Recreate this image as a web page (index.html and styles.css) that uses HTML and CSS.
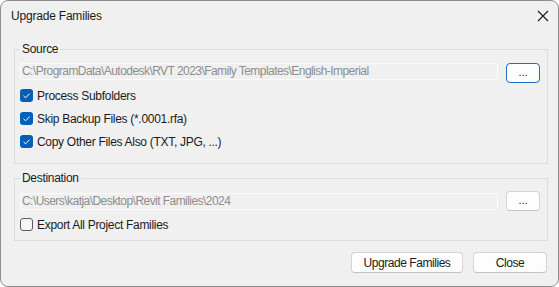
FILE: index.html
```html
<!DOCTYPE html>
<html>
<head>
<meta charset="utf-8">
<link rel="stylesheet" href="styles.css">
</head>
<body>
<div class="window">
  <div class="titlebar">
    <span class="title">Upgrade Families</span>
    <svg class="close-x" width="12" height="12" viewBox="0 0 12 12"><path d="M1 1 L11 11 M11 1 L1 11" stroke="#1a1a1a" stroke-width="1.1" fill="none"/></svg>
  </div>
  <div class="content">
    <fieldset class="group source">
      <legend>Source</legend>
      <div class="path-row">
        <div class="textbox">C:\ProgramData\Autodesk\RVT 2023\Family Templates\English-Imperial</div>
        <div class="btn browse focused">...</div>
      </div>
      <div class="check-row"><span class="box checked"><svg width="13" height="13" viewBox="0 0 13 13"><path d="M3.5 6.8 L5.6 8.8 L9.6 4.6" stroke="#fff" stroke-width="1" fill="none"/></svg></span><span>Process Subfolders</span></div>
      <div class="check-row"><span class="box checked"><svg width="13" height="13" viewBox="0 0 13 13"><path d="M3.5 6.8 L5.6 8.8 L9.6 4.6" stroke="#fff" stroke-width="1" fill="none"/></svg></span><span>Skip Backup Files (*.0001.rfa)</span></div>
      <div class="check-row"><span class="box checked"><svg width="13" height="13" viewBox="0 0 13 13"><path d="M3.5 6.8 L5.6 8.8 L9.6 4.6" stroke="#fff" stroke-width="1" fill="none"/></svg></span><span>Copy Other Files Also (TXT, JPG, ...)</span></div>
    </fieldset>
    <fieldset class="group destination">
      <legend>Destination</legend>
      <div class="path-row">
        <div class="textbox">C:\Users\katja\Desktop\Revit Families\2024</div>
        <div class="btn browse">...</div>
      </div>
      <div class="check-row"><span class="box"></span><span>Export All Project Families</span></div>
    </fieldset>
    <div class="actions">
      <div class="btn action upgrade">Upgrade Families</div>
      <div class="btn action close">Close</div>
    </div>
  </div>
</div>
</body>
</html>
```

FILE: styles.css
```css
html, body {
  margin: 0;
  padding: 0;
  background: #ffffff;
}
body {
  font-family: "Liberation Sans", Arial, sans-serif;
  font-size: 12px;
  letter-spacing: -0.3px;
  color: #1b1b1b;
}
.window {
  width: 557px;
  height: 285px;
  border: 1px solid #8e8e8e;
  border-radius: 8px;
  background: #f0f0f0;
  overflow: hidden;
}
.titlebar {
  height: 32px;
  display: flex;
  align-items: center;
  justify-content: space-between;
  padding: 0 9px 2px 10px;
  box-sizing: border-box;
}
.title {
  font-size: 12px;
  line-height: 16px;
  letter-spacing: -0.2px;
  color: #1a1a1a;
}
.close-x {
  display: block;
}
.content {
  padding: 8px 10px 0 13px;
}
.group {
  margin: 0;
  border: 1px solid #dcdcdc;
  padding: 6px 7px 10px 5px;
}
.group legend {
  padding: 0 2px;
  line-height: 16px;
  color: #1b1b1b;
}
.path-row {
  display: flex;
  align-items: flex-start;
  height: 20px;
}
.textbox {
  flex: 1;
  height: 17px;
  box-sizing: border-box;
  border: 1px solid #fbfbfb;
  border-radius: 2px;
  background: #f0f0f0;
  color: #8d8d8d;
  line-height: 15px;
  letter-spacing: -0.55px;
  padding: 0 2px 0 1px;
  white-space: nowrap;
  overflow: hidden;
}
.btn {
  box-sizing: border-box;
  background: #fdfdfd;
  border: 1px solid #d3d3d3;
  border-bottom-color: #c2c2c2;
  border-radius: 4px;
  display: flex;
  align-items: center;
  justify-content: center;
  color: #1b1b1b;
}
.browse {
  width: 34px;
  height: 20px;
  margin-left: 8px;
  font-size: 11px;
  line-height: 12px;
  letter-spacing: 0;
  padding-bottom: 2px;
}
.browse.focused {
  border: 1px solid #1d6fc0;
  box-shadow: inset 0 0 0 1px #ffffff;
}
.check-row {
  display: flex;
  align-items: center;
  height: 23px;
  gap: 4px;
}
.box {
  width: 13px;
  height: 13px;
  box-sizing: border-box;
  border: 1px solid #5d5d5d;
  border-radius: 3px;
  background: #f6f6f6;
  flex: none;
  display: block;
}
.box.checked {
  border: none;
  background: #005fb8;
}
.box svg {
  display: block;
}
.source .path-row {
  margin-bottom: 1px;
}
.destination {
  margin-top: 6px;
  padding: 5px 7px 4px 5px;
}
.destination .textbox {
  margin-top: 2px;
}
.destination .check-row {
  margin-top: 2px;
}
.actions {
  display: flex;
  justify-content: flex-end;
  gap: 10px;
  margin-top: 11px;
  padding-right: 1px;
}
.action {
  height: 21px;
  line-height: 16px;
  letter-spacing: -0.45px;
}
.upgrade {
  width: 112px;
}
.close {
  width: 74px;
}
```
